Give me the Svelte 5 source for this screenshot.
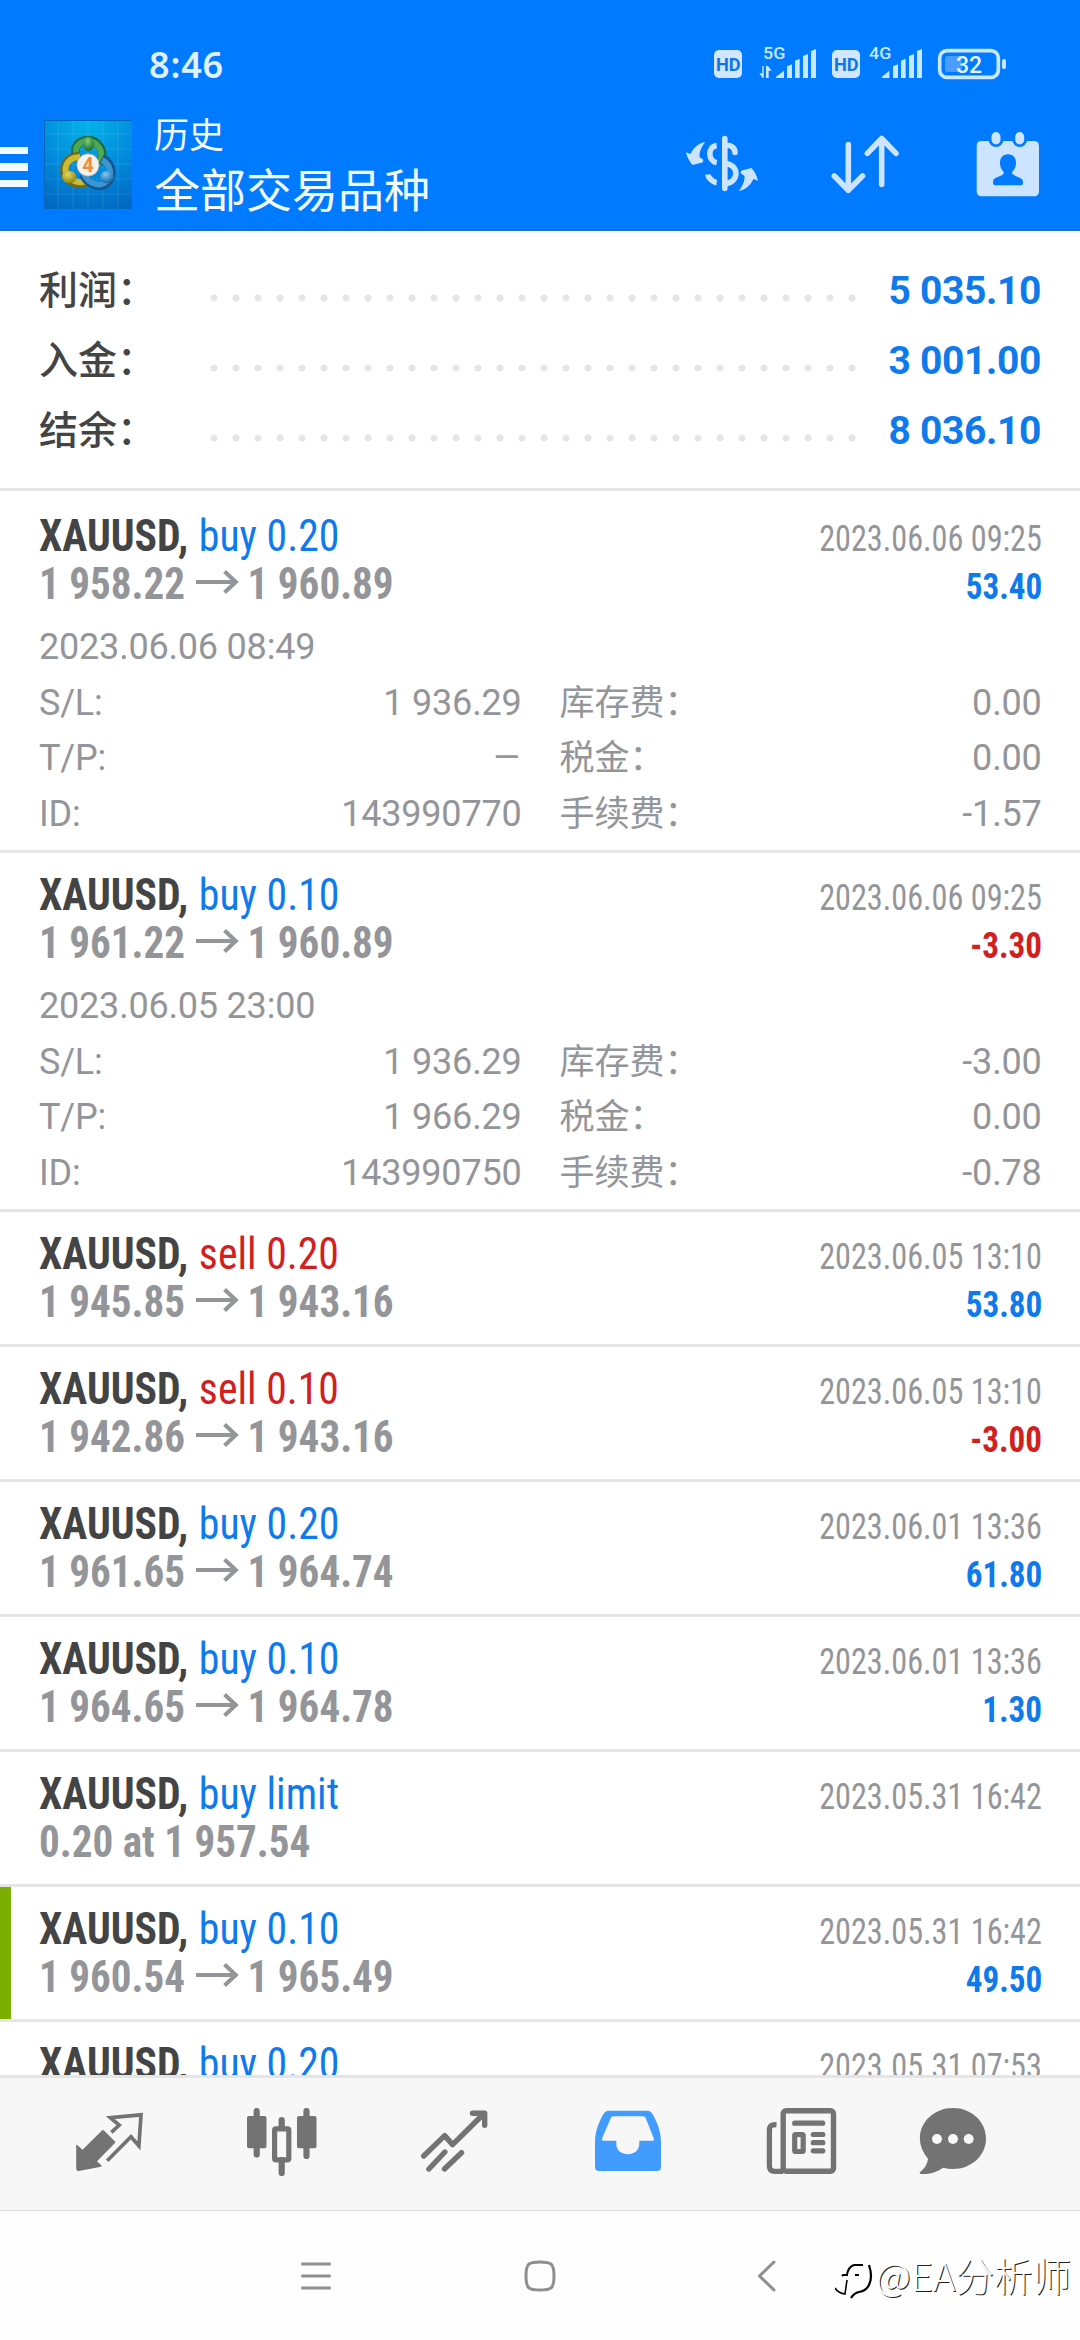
<script lang="ts">
	type Deal = {
		kind: string;
		side: 'buy' | 'sell';
		open?: string;
		close?: string;
		note?: string;
		time: string;
		profit?: string;
		marked?: boolean;
		opened?: string;
		rows?: string[][];
	};

	const symbol = 'XAUUSD,';

	const summary = [
		{ label: '利润：', value: '5 035.10' },
		{ label: '入金：', value: '3 001.00' },
		{ label: '结余：', value: '8 036.10' }
	];

	const deals: Deal[] = [
		{
			kind: 'buy 0.20', side: 'buy', open: '1 958.22', close: '1 960.89',
			time: '2023.06.06 09:25', profit: '53.40', opened: '2023.06.06 08:49',
			rows: [
				['S/L:', '1 936.29', '库存费：', '0.00'],
				['T/P:', '–', '税金：', '0.00'],
				['ID:', '143990770', '手续费：', '-1.57']
			]
		},
		{
			kind: 'buy 0.10', side: 'buy', open: '1 961.22', close: '1 960.89',
			time: '2023.06.06 09:25', profit: '-3.30', opened: '2023.06.05 23:00',
			rows: [
				['S/L:', '1 936.29', '库存费：', '-3.00'],
				['T/P:', '1 966.29', '税金：', '0.00'],
				['ID:', '143990750', '手续费：', '-0.78']
			]
		},
		{ kind: 'sell 0.20', side: 'sell', open: '1 945.85', close: '1 943.16', time: '2023.06.05 13:10', profit: '53.80' },
		{ kind: 'sell 0.10', side: 'sell', open: '1 942.86', close: '1 943.16', time: '2023.06.05 13:10', profit: '-3.00' },
		{ kind: 'buy 0.20', side: 'buy', open: '1 961.65', close: '1 964.74', time: '2023.06.01 13:36', profit: '61.80' },
		{ kind: 'buy 0.10', side: 'buy', open: '1 964.65', close: '1 964.78', time: '2023.06.01 13:36', profit: '1.30' },
		{ kind: 'buy limit', side: 'buy', note: '0.20 at 1 957.54', time: '2023.05.31 16:42' },
		{ kind: 'buy 0.10', side: 'buy', open: '1 960.54', close: '1 965.49', time: '2023.05.31 16:42', profit: '49.50', marked: true },
		{ kind: 'buy 0.20', side: 'buy', time: '2023.05.31 07:53' }
	];
</script>

<div class="screen">
	<header>
		<div class="status">
			<span class="clock">8:46</span>
			<svg class="indicators" viewBox="210 30 900 120">
				<g fill="#d2e7ff">
					<rect x="222" y="60" width="84" height="84" rx="15" />
					<rect x="576" y="60" width="84" height="84" rx="15" />
				</g>
				<g fill="#1176e6" font-family="Roboto" font-size="54" font-weight="700">
					<text x="228" y="122" textLength="74" lengthAdjust="spacingAndGlyphs">HD</text>
					<text x="582" y="122" textLength="74" lengthAdjust="spacingAndGlyphs">HD</text>
				</g>
				<g fill="#c8e8ff" font-family="Roboto" font-size="49" font-weight="500">
					<text x="369" y="87" textLength="67" lengthAdjust="spacingAndGlyphs">5G</text>
					<text x="687" y="87" textLength="67" lengthAdjust="spacingAndGlyphs">4G</text>
				</g>
				<g fill="#c8e8ff">
					<path d="M367 108h4v36h-3l-10-14h9zM378 144v-36h6l11 14h-9v22z" />
					<path d="M408 144v-4l24-18v22zM441 144v-35l15-6v41zM465 144V92l14-6v58zM489 144V78l15-6v72zM513 144V63l15-6v87z" />
					<path d="M726 144v-4l22-18v22zM759 144v-35l15-6v41zM783 144V92l14-6v58zM807 144V78l15-6v72zM831 144V63l15-6v87z" />
					<rect x="1086" y="87" width="12" height="30" rx="6" />
				</g>
				<rect x="915" y="78" width="50" height="48" rx="8" fill="#4a9dff" />
				<rect x="899" y="62" width="176" height="80" rx="22" fill="none" stroke="#c8e8ff" stroke-width="11" />
				<text x="987" y="129" fill="#e6f4ff" font-family="Roboto" font-size="69" font-weight="500" text-anchor="middle">32</text>
			</svg>
		</div>

		<div class="toolbar">
			<div class="burger"><i></i><i></i><i></i></div>
			<svg class="logo" viewBox="0 0 88 89">
				<defs>
					<radialGradient id="sky" cx=".5" cy="0" r="1.05">
						<stop offset="0" stop-color="#04b4ea" />
						<stop offset=".55" stop-color="#018bdc" />
						<stop offset="1" stop-color="#0269c2" />
					</radialGradient>
					<radialGradient id="leaf" cx=".45" cy=".3" r=".7">
						<stop offset="0" stop-color="#7fce78" />
						<stop offset="1" stop-color="#176d2c" />
					</radialGradient>
					<radialGradient id="gold" cx=".4" cy=".3" r=".7">
						<stop offset="0" stop-color="#e4da5c" />
						<stop offset="1" stop-color="#8f8313" />
					</radialGradient>
					<radialGradient id="wave" cx=".4" cy=".3" r=".7">
						<stop offset="0" stop-color="#7ecbf4" />
						<stop offset="1" stop-color="#1464a6" />
					</radialGradient>
				</defs>
				<rect width="88" height="89" fill="url(#sky)" />
				<path d="M14 0v89M29 0v89M44 0v89M59 0v89M74 0v89M0 14h88M0 29h88M0 44h88M0 59h88M0 74h88" stroke="#fff" stroke-opacity=".1" fill="none" />
				<path d="M.5 0v89M0 .5h88" stroke="#0565ba" stroke-width="1" />
				<g fill="none">
					<path d="M33 38C28 26 36 20 44 20s19 9 12 24" stroke="#1c6b3b" stroke-width="8.500" />
					<path d="M33 37C29 26 37 21 44 21s17 8 12 21" stroke="#4fa653" stroke-width="6" />
					<path d="M36 36C23 36 19 46 21 54s15 13 23 8" stroke="#6d6a1c" stroke-width="8.500" />
					<path d="M36 37C25 37 20 45 22 53s14 11 21 8" stroke="#cdbc33" stroke-width="6" />
					<path d="M39 54C44 66 58 69 64 62S68 43 58 38" stroke="#14558f" stroke-width="8.500" />
					<path d="M40 54C45 65 57 67 63 61S66 44 58 40" stroke="#3a95d2" stroke-width="6" />
				</g>
				<ellipse cx="44.300" cy="24" rx="5.700" ry="7.200" fill="url(#leaf)" />
				<ellipse cx="25.300" cy="57" rx="7.200" ry="6.300" fill="url(#gold)" />
				<ellipse cx="63" cy="57" rx="7" ry="6.200" fill="url(#wave)" />
				<circle cx="44" cy="45" r="11.200" fill="#f6f1ec" stroke="#8d9a90" stroke-width=".7" />
				<text x="44" y="52" fill="#f08a36" font-family="Roboto" font-size="20" font-weight="700" text-anchor="middle">4</text>
			</svg>
			<div class="titles">
				<div class="section">历史</div>
				<div class="filter">全部交易品种</div>
			</div>
			<div class="actions">
				<svg viewBox="0 0 72 66" fill="none" stroke="#cce4ff" stroke-width="5.6">
					<path d="M38.8 6.5v50" stroke-linecap="round" />
					<path d="M30.7 13.6C21.5 14.5 21.5 29 30.7 30.8M21.8 42.5C22 45 26 50 30.7 50.6" />
					<path d="M40 13.3C45.5 13 49 16 49 20.5" stroke-linecap="round" />
					<path d="M39 31.5C53.5 32 53.5 51 39 51.5" />
					<path d="M0 20.3l4.5 1.7C8 15 13 11 19.3 10 16 14 13.2 19 13.5 25l4 3-1 2.5L6.500 33C3 29 1 25 0 20.3z" fill="#cce4ff" stroke="none" />
					<path d="M0 20.3l4.5 1.7C8 15 13 11 19.3 10 16 14 13.2 19 13.5 25l4 3-1 2.5L6.500 33C3 29 1 25 0 20.3z" transform="rotate(180 36 34.5)" fill="#cce4ff" stroke="none" />
				</svg>
				<svg viewBox="0 0 72 66" fill="none" stroke="#cce4ff" stroke-width="5.6" stroke-linecap="round" stroke-linejoin="round">
					<path d="M19.3 12.5V57M5.3 44l14 14.3 14.2-14.3M52.7 52.5V8M38.4 21.4L52.7 6.5 67 21.4" />
				</svg>
				<svg viewBox="0 0 72 66">
					<rect x="4.7" y="9" width="62.3" height="55.3" rx="4.5" fill="#cce4ff" />
					<path d="M24 4v3.500M47.700 4v3.500" stroke="#007aff" stroke-width="15" stroke-linecap="round" />
					<path d="M24 4.600v3.300M47.700 4.600v3.300" stroke="#cce4ff" stroke-width="9" stroke-linecap="round" />
					<path d="M36 22.300c5 0 8 3.500 8 8.500 0 5-2 7-4 9.500 0 5 11 3.500 11 9.500v1.500q0 2-2 2H23q-2 0-2-2v-1.500c0-6 11-4.500 11-9.500-2-2.500-4-4.500-4-9.500 0-5 3-8.500 8-8.500z" fill="#007aff" />
				</svg>
			</div>
		</div>
	</header>

	<section class="summary">
		{#each summary as item}
			<div class="total">
				<span class="total-label">{item.label}</span>
				<span class="dots"></span>
				<span class="total-value">{item.value}</span>
			</div>
		{/each}
	</section>

	<main>
		{#each deals as deal}
			<article class:marked={deal.marked}>
				<div class="line">
					<span class="name"><b>{symbol}</b> <span class={deal.side}>{deal.kind}</span></span>
					<span class="time">{deal.time}</span>
				</div>
				<div class="line">
					{#if deal.note}
						<span class="prices">{deal.note}</span>
					{:else if deal.open}
						<span class="prices">
							<span>{deal.open}</span>
							<svg class="arrow" viewBox="0 0 42 24" preserveAspectRatio="none"><path d="M0 12h39M28 1.500L39 12 28 22.500" fill="none" stroke="#949599" stroke-width="4" /></svg>
							<span>{deal.close}</span>
						</span>
						<span class="profit" class:loss={deal.profit?.startsWith('-')}>{deal.profit}</span>
					{/if}
				</div>
				{#if deal.rows}
					<div class="details">
						<div class="cells"><span>{deal.opened}</span></div>
						{#each deal.rows as [name, value, feeName, fee]}
							<div class="cells">
								<span>{name}</span>
								<span class="num" class:empty={value === '–'}>{value}</span>
								<span class="fee">{feeName}</span>
								<span class="num">{fee}</span>
							</div>
						{/each}
					</div>
				{/if}
			</article>
		{/each}
	</main>

	<nav class="tabs">
		<svg viewBox="0 0 72 72">
			<path d="M3.200 37.500q0-1.500 1.300-.3l5 4.500L29 22.500q1-1 2 0l11 11q.8.800 0 1.600L24 53.300l4.300 4q1 1.200-.5 1.500L6 63q-2.800.3-2.800-2.500z" fill="#737373" />
			<path d="M38.400 24.300l7.800-7.200-8.900-7.400L68 6.900l-2.100 31-7.900-9.200-23.800 24" fill="none" stroke="#737373" stroke-width="3.700" />
		</svg>
		<svg viewBox="0 0 72 72" fill="#737373">
			<rect x="1" y="8" width="19.500" height="32.300" rx="2" />
			<rect x="51" y="8" width="19.500" height="32.300" rx="2" />
			<path d="M10.700 3v43.500M60.500 3v45M35.700 12v8M35.700 52v13" stroke="#737373" stroke-width="6.200" stroke-linecap="round" />
			<rect x="28.600" y="20.900" width="14.200" height="31" rx="1.500" fill="none" stroke="#737373" stroke-width="5.200" />
		</svg>
		<svg viewBox="0 0 72 72" fill="none" stroke="#737373" stroke-width="5.400">
			<path d="M4.700 48l21-20.400 7.900 9L65 5.500" stroke-linecap="round" stroke-linejoin="round" />
			<path d="M53.500 5.300h12.200v12" stroke-linecap="round" stroke-linejoin="round" />
			<path d="M9.900 61l16-17M25.500 61L42.500 44.700" stroke-linecap="round" />
		</svg>
		<svg viewBox="0 0 72 72">
			<path fill-rule="evenodd" d="M16 2.700h40q2.500 0 4 2.500C65 13 69 24 69 34v25q0 4-4 4H7q-4 0-4-4V34C3 24 7 13 12 5.200q1.500-2.500 4-2.500zM21.500 8.300q-2 0-2.800 1.900L10 30.500q-.7 2.200 1.500 2.200h12.800v3c0 14 23 14 23 0v-3H60q2.600 0 1.800-2.200l-8-20.300Q53 8.300 51 8.300z" fill="#429bff" />
		</svg>
		<svg viewBox="0 0 72 72" fill="none" stroke="#737373">
			<rect x="18.200" y="2.700" width="50.300" height="60.600" rx="3" stroke-width="5.400" />
			<path d="M11.500 16.800Q4.400 16 4.400 22v36q0 5.300 5.300 5.300H18" stroke-width="5.300" />
			<path d="M29.700 15.200h28M48.300 26.500h9.500M48.300 34.700h9.500M48.300 42.800h9.500" stroke-width="5.200" stroke-linecap="round" />
			<rect x="29.700" y="26.500" width="8.500" height="17" rx="1" stroke-width="5.200" />
		</svg>
		<svg viewBox="0 0 72 72">
			<path d="M36 0c18.500 0 33 13.500 33 30.500S54.500 61 36 61q-5 0-10-1.300C20 64 12 66.500 4 66q-2.500-.5-.5-2.300 7-6 7.500-13Q2.900 41 2.900 30.500C2.900 13.500 17.500 0 36 0z" fill="#737373" />
			<g fill="#f7f7f7"><circle cx="20" cy="31" r="5" /><circle cx="36" cy="31" r="5" /><circle cx="51.700" cy="31" r="5" /></g>
		</svg>
	</nav>

	<footer>
		<svg viewBox="0 0 36 36"><path d="M5.500 6h27M5.500 18h27M5.500 30h27" /></svg>
		<svg viewBox="0 0 36 36"><path d="M18 4c11 0 14 1 14 14s-3 14-14 14S4 31 4 18 7 4 18 4z" /></svg>
		<svg viewBox="0 0 36 36"><path d="M27 4L12.500 18 27 32" stroke-linejoin="round" /></svg>
		<div class="watermark">
			<svg viewBox="0 0 40 40" fill="none" stroke="#000">
				<path d="M7 15l1-1h4Q13 6 19 4h9M20 14h4" stroke-width="2" />
				<path d="M34 4q4 12 0 20-3 6-10 7-5 1-8 6" stroke-width="2.200" />
				<path d="M0 27q3 5 10 6l2-14" stroke-width="1.600" />
			</svg>
			<span>@EA分析师</span>
		</div>
	</footer>
</div>

<style>
	:global(body) {
		margin: 0;
		background: #fff;
	}

	.screen {
		width: 1080px;
		height: 2340px;
		display: flex;
		flex-direction: column;
		overflow: hidden;
		background: #fff;
		font-family: Roboto, 'Noto Sans CJK SC', sans-serif;
		color: #949599;
	}

	header {
		height: 229px;
		flex: none;
		background: #007aff;
		border-bottom: 2px solid #1b6dc0;
		color: #f2fbff;
	}

	.status {
		display: flex;
		align-items: center;
		justify-content: space-between;
		height: 83px;
		padding: 22px 70px 0 149px;
	}

	.clock {
		padding-top: 1px;
		font-family: 'Noto Sans', sans-serif;
		font-size: 36px;
		font-weight: 600;
		letter-spacing: 0.8px;
		color: #e0f2ff;
	}

	.indicators {
		width: 300px;
		height: 40px;
		margin-bottom: 7px;
	}

	.toolbar {
		display: flex;
		align-items: center;
		height: 119px;
	}

	.burger {
		display: flex;
		flex-direction: column;
		gap: 9px;
		width: 44px;
		padding-top: 5px;
	}

	.burger i {
		width: 27.5px;
		height: 7.5px;
		background: #f2fbff;
	}

	.logo {
		width: 88px;
		height: 89px;
	}

	.titles {
		flex: 1;
		margin-left: 22px;
		padding-bottom: 5px;
		font-family: 'Noto Sans CJK SC', sans-serif;
	}

	.section {
		font-size: 35px;
		line-height: 50px;
	}

	.filter {
		font-size: 46px;
		line-height: 59px;
	}

	.actions {
		display: flex;
		gap: 71px;
		padding-right: 36px;
	}

	.actions svg {
		width: 72px;
		height: 66px;
	}

	.summary {
		flex: none;
		padding: 25px 39px 22px;
		border-bottom: 3px solid #e5e5e5;
	}

	.total {
		display: flex;
		align-items: center;
		height: 70px;
		line-height: 70px;
		font-size: 39px;
	}

	.total-label {
		width: 163.5px;
		font-weight: 500;
		color: #444;
	}

	.dots {
		width: 660px;
		height: 8px;
		margin-top: 13px;
		background: radial-gradient(circle, #e5e5e5 3.2px, transparent 3.9px) 0 0 / 22px 8px;
	}

	.total-value {
		flex: 1;
		text-align: right;
		font-weight: 700;
		letter-spacing: -0.35px;
		color: #0e7aec;
	}

	main {
		flex: 1;
		min-height: 0;
		overflow: hidden;
		padding-top: 3px;
	}

	article {
		padding: 18px 38px 18px 39px;
		border-bottom: 3px solid #e5e5e5;
	}

	article:has(.details) {
		padding-bottom: 8px;
	}

	.marked {
		box-shadow: inset 11px 0 0 #7cb000;
	}

	.line {
		display: flex;
		justify-content: space-between;
		align-items: baseline;
		height: 48px;
		line-height: 48px;
		font-family: 'Roboto Condensed', Roboto, sans-serif;
		font-stretch: 75%;
		white-space: nowrap;
	}

	/* squeeze the condensed face a bit further */
	.name {
		font-size: 44px;
		transform: scaleX(0.948);
		transform-origin: left;
	}

	.name b {
		margin-right: 1px;
		color: #444;
	}

	.buy {
		color: #0e7aec;
	}

	.sell {
		color: #d2201f;
	}

	.time {
		font-size: 36px;
		transform: scaleX(0.895);
		transform-origin: right;
	}

	.prices {
		display: flex;
		align-items: baseline;
		font-size: 44px;
		font-weight: 700;
		transform: scaleX(0.934);
		transform-origin: left;
	}

	.arrow {
		width: 46px;
		height: 24px;
		margin: 0 9px 0 12px;
		transform: translateY(-5px);
	}

	.profit {
		font-size: 36px;
		font-weight: 700;
		color: #0e7aec;
		transform: scaleX(0.92);
		transform-origin: right;
	}

	.loss {
		color: #d2201f;
	}

	.details {
		margin-top: 12px;
		font-size: 36px;
		letter-spacing: -0.2px;
	}

	.cells {
		display: grid;
		grid-template-columns: 180px 302.5px 200px 320px;
		height: 55.5px;
		line-height: 55.5px;
		white-space: nowrap;
	}

	.num {
		text-align: right;
	}

	.empty {
		transform: scaleX(1.25);
		transform-origin: right;
	}

	.fee {
		padding-left: 38px;
		font-size: 35px;
		letter-spacing: 0;
	}

	.tabs {
		flex: none;
		display: grid;
		grid-template-columns: repeat(5, 173px) 132px;
		place-items: center;
		height: 132px;
		padding-left: 22px;
		background: #f7f7f7;
		border-top: 3px solid #e5e5e5;
		border-bottom: 1px solid #dedede;
	}

	.tabs svg {
		width: 72px;
		height: 72px;
	}

	footer {
		position: relative;
		flex: none;
		display: flex;
		align-items: center;
		justify-content: center;
		gap: 189px;
		height: 129px;
		background: #fefefe;
	}

	footer > svg {
		width: 36px;
		height: 36px;
		fill: none;
		stroke: #8e8e8e;
		stroke-width: 3;
		stroke-linecap: round;
	}

	.watermark {
		position: absolute;
		right: 9px;
		top: 35px;
		display: flex;
		align-items: center;
		gap: 1px;
		font-family: 'Noto Sans CJK SC', sans-serif;
		font-size: 38.5px;
		font-weight: 300;
		line-height: 56px;
		color: #fff;
		text-shadow: 1px 1px 0 #222;
	}

	.watermark svg {
		width: 40px;
		height: 40px;
		margin-top: 14px;
	}
</style>
